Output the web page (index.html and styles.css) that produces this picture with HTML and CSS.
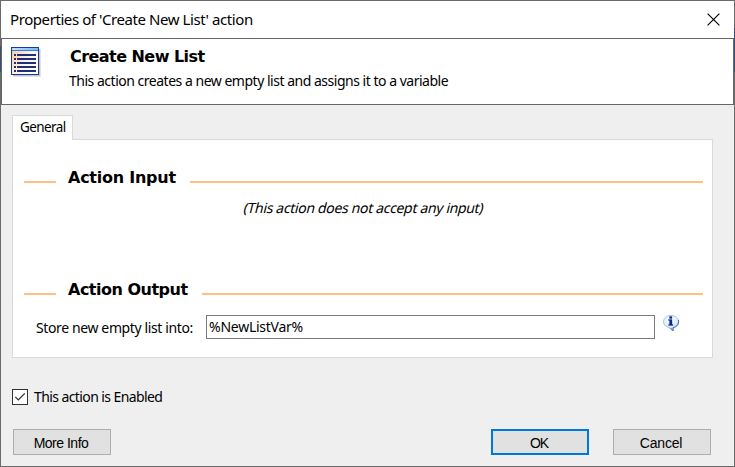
FILE: index.html
```html
<!DOCTYPE html>
<html lang="en">
<head>
<meta charset="utf-8">
<title>Properties of 'Create New List' action</title>
<link rel="stylesheet" href="styles.css">
</head>
<body>
<main class="dialog">
  <div class="titlebar">
    <span class="title">Properties of 'Create New List' action</span>
    <svg class="close" width="13" height="13" viewBox="0 0 13 13"><path d="M.6.6 12.4 12.4M12.4.6.6 12.4" stroke="#000" stroke-width="1.15"/></svg>
  </div>
  <header class="header">
    <svg class="list-icon" width="31" height="31" viewBox="0 0 31 31">
      <defs><linearGradient id="paper" x1="0" y1="0" x2="1" y2=".7"><stop offset="0" stop-color="#ffc78f"/><stop offset=".6" stop-color="#fff4e8"/><stop offset="1" stop-color="#fff"/></linearGradient>
      <linearGradient id="bar" x1="0" x2="1"><stop offset="0" stop-color="#c3e0fd"/><stop offset="1" stop-color="#78b5f6"/></linearGradient></defs>
      <path d="M2 2h28v28H2z" fill="#e2e2e2"/><path d="M2 2h27v27H2z" fill="#c4c4c8"/>
      <path d="M0 0h28v28H0z" fill="#143c98"/>
      <path d="M1 1h26v26H1z" fill="url(#paper)"/>
      <path d="M1 1h26v2H1z" fill="url(#bar)"/><path d="M1 3h26v1H1z" fill="#2583ef"/>
      <path d="M3 7h2v2H3zM3 11h2v2H3zM3 15h2v2H3zM3 19h2v2H3zM3 23h2v2H3zM6 7h19v2H6zM6 11h19v2H6zM6 15h19v2H6zM6 19h19v2H6zM6 23h19v2H6z" fill="#1c2f80"/>
    </svg>
    <div class="heading">
      <h1>Create New List</h1>
      <p class="desc">This action creates a new empty list and assigns it to a variable</p>
    </div>
  </header>
  <section class="tabs">
    <div class="tab"><span class="tab-label">General</span></div>
    <div class="panel">
      <div class="group"><h2 class="in">Action Input</h2></div>
      <p class="empty"><span class="none">(This action does not accept any input)</span></p>
      <div class="group"><h2 class="out">Action Output</h2></div>
      <div class="field">
        <label class="store">Store new empty list into:</label>
        <div class="input"><span class="value">%NewListVar%</span></div>
        <svg class="info" width="17" height="17" viewBox="0 0 17 17">
          <defs><radialGradient id="bubble" cx=".45" cy=".3" r=".7"><stop offset="0" stop-color="#fff"/><stop offset=".6" stop-color="#deefff"/><stop offset="1" stop-color="#91bfe9"/></radialGradient></defs>
          <path d="M8 .4C3.8.4.5 3 .5 6.800c0 3 2.400 5.100 5.700 5.900L10 16v-3.300c3.400-.7 5.700-2.900 5.700-5.900C15.700 3 12.300.4 8 .4z" fill="url(#bubble)" stroke="#9fb8d6" stroke-width=".8"/>
          <path d="M15.400 5c.8 4-1.300 6.700-5.200 7.600L10 15.700l-2.700-2.800" fill="none" stroke="#456a98" stroke-width="1"/>
          <path d="M6.500 1.500H9v2H6.500zM5.500 4.500H9v5h1v1H5.500v-1h1v-4h-1z" fill="#10288a" stroke="#10288a" stroke-width=".3"/>
        </svg>
      </div>
    </div>
  </section>
  <div class="enabled">
    <span class="check"><svg width="14" height="14" viewBox="0 0 14 14"><path d="M2.300 6.900 5.300 9.900 11.800 3.400" fill="none" stroke="#333" stroke-width="1.300"/></svg></span>
    <span class="enabled-label">This action is Enabled</span>
  </div>
  <footer class="footer">
    <button class="btn more">More Info</button>
    <button class="btn ok">OK</button>
    <button class="btn cancel">Cancel</button>
  </footer>
</main>
</body>
</html>
```
FILE: styles.css
```css
* { box-sizing: border-box; }
body { margin: 0; font: 14px/20px "Noto Sans", sans-serif; color: #000; }
h1, h2, p { margin: 0; }
span, label, h1, h2, p { white-space: nowrap; }
svg { display: block; flex: none; }
.dialog {
  width: 735px; height: 467px; padding: 1px; display: flex; flex-direction: column; overflow: hidden;
  background:
    linear-gradient(#3f4d73, #3f4d73) 734px 28px / 1px 44px no-repeat,
    linear-gradient(#3f4d73, #3f4d73) 0 46px / 1px 26px no-repeat,
    linear-gradient(#efefef, #efefef) 1px 1px / 733px 465px no-repeat,
    #6b6a6b;
}
.titlebar { height: 37px; background: #fff; display: flex; justify-content: space-between; padding: 8px 14.5px 0 9px; }
.title { font-size: 15px; letter-spacing: -.42px; }
.close { margin-top: 3.5px; }
.header { height: 67px; border: 1px solid #666; background: #fff; display: flex; padding: 8px 0 0 9px; }
.heading { margin-left: 27px; }
h1, h2 { font: bold 16px/20px "DejaVu Sans", sans-serif; letter-spacing: -.5px; }
h1 { padding-left: 1px; letter-spacing: -.55px; }
.desc { margin-top: 4px; letter-spacing: -.485px; }
.tabs { margin: 10px 21px 0 11px; height: 243px; flex: none; }
.tab { position: relative; z-index: 1; width: 61px; height: 25px; border: 1px solid #d9d9d9; border-bottom: 0; background: #fff; padding: 1px 0 0 7px; }
.tab-label { font-size: 13.5px; letter-spacing: -.6px; }
.panel { height: 219px; margin-top: -1px; border: 1px solid #d9d9d9; background: #fff; padding: 28px 9px 0 11px; }
.group { display: flex; align-items: center; height: 20px; }
.group::before, .group::after { content: ""; height: 2px; background: #ffc080; margin-top: 8px; }
.group::before { width: 32px; margin-right: 12px; }
.group::after { flex: 1; margin-left: 14px; }
.in { width: 108px; letter-spacing: -.25px; }
.out { width: 120px; }
.empty { height: 92px; padding-top: 10px; text-align: center; }
.none { display: inline-block; letter-spacing: -.33px; transform: skewX(-14deg); }
.field { display: flex; margin: 15px 0 0 12px; }
.store { width: 170px; padding-top: 3px; letter-spacing: -.38px; }
.input { width: 449px; height: 24px; border: 1px solid #7a7a7a; padding: 1px 0 0 2px; }
.value { letter-spacing: -.25px; }
.info { margin-left: 8px; }
.enabled { display: flex; height: 16px; margin: 31px 0 0 11px; align-items: center; }
.enabled-label { letter-spacing: -.59px; }
.check { width: 16px; height: 16px; border: 1px solid #333; background: #fff; margin-right: 6px; }
.footer { display: flex; margin: 24px 23px 0 12px; }
.btn { width: 98px; height: 26px; padding: 1px 0 0; border: 1px solid #adadad; border-radius: 0; background: #e1e1e1; color: #000; font: 14px/20px "Liberation Sans", sans-serif; letter-spacing: -.5px; }
.more { margin-right: auto; padding-right: 2px; }
.ok { border: 2px solid #0078d7; margin-right: 24px; padding-right: 2px; letter-spacing: -1px; }
.cancel { letter-spacing: -.2px; padding-right: 2px; }
```
